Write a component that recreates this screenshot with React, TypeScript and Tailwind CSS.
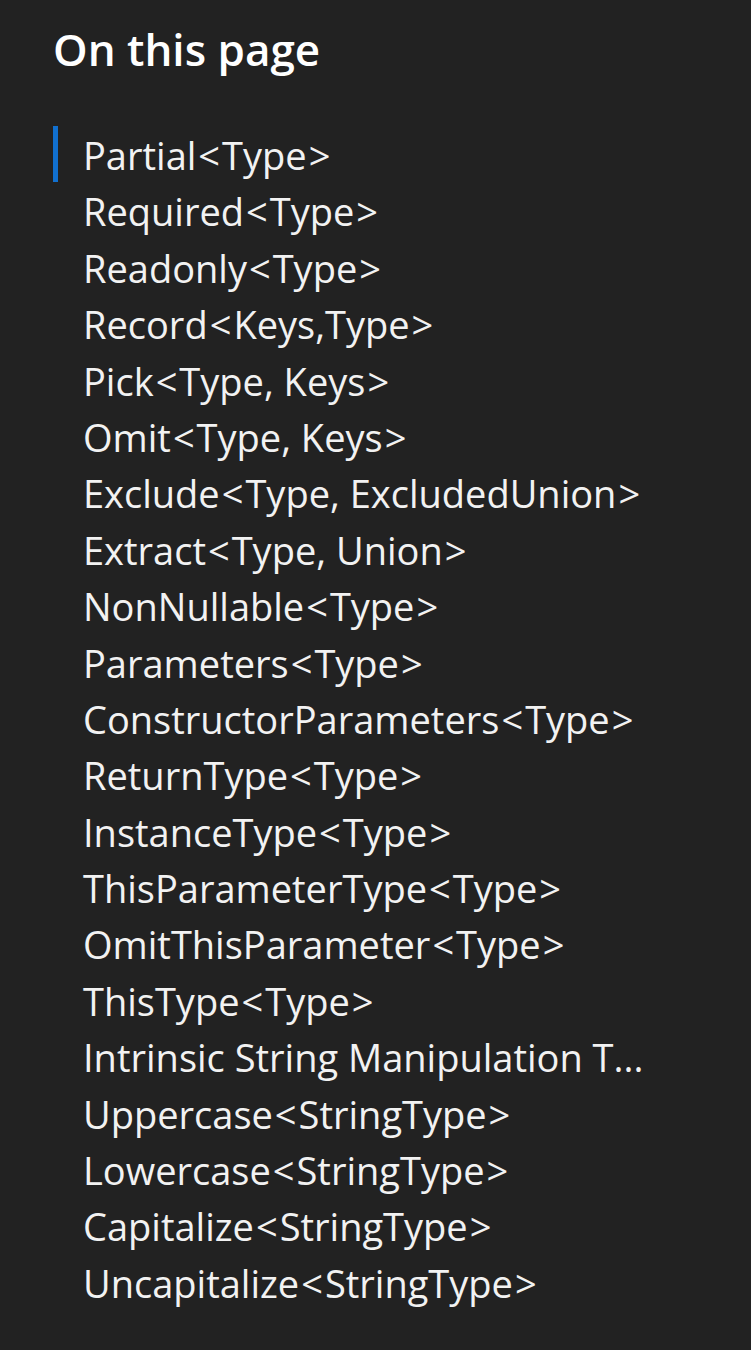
const items = [
  'Partial<Type>',
  'Required<Type>',
  'Readonly<Type>',
  'Record<Keys,Type>',
  'Pick<Type, Keys>',
  'Omit<Type, Keys>',
  'Exclude<Type, ExcludedUnion>',
  'Extract<Type, Union>',
  'NonNullable<Type>',
  'Parameters<Type>',
  'ConstructorParameters<Type>',
  'ReturnType<Type>',
  'InstanceType<Type>',
  'ThisParameterType<Type>',
  'OmitThisParameter<Type>',
  'ThisType<Type>',
  'Intrinsic String Manipulation T...',
  'Uppercase<StringType>',
  'Lowercase<StringType>',
  'Capitalize<StringType>',
  'Uncapitalize<StringType>',
]

// angle brackets sit wider in the original font
function Label({ text }: { text: string }) {
  return (
    <>
      {text.split(/([<>])/).map((part, i) =>
        part === '<' || part === '>' ? (
          <span key={i} className="mx-[2px]">
            {part}
          </span>
        ) : (
          part
        )
      )}
    </>
  )
}

export default function App() {
  return (
    <div className="min-h-[1350px] bg-[#222222] pl-[53px] pt-[18px] font-['Open_Sans',sans-serif] text-[#f2f2f2]">
      <h2 className="text-[44px] leading-[62px] font-semibold text-white">On this page</h2>
      <ul className="mt-[46px]">
        {items.map((item, i) => (
          <li
            key={item}
            className={
              'h-[56.4px] border-l-[5px] pl-[25px] text-[38px] leading-[58px] whitespace-nowrap ' +
              (i === 0 ? 'border-[#1170cf]' : 'border-transparent')
            }
          >
            <Label text={item} />
          </li>
        ))}
      </ul>
    </div>
  )
}
